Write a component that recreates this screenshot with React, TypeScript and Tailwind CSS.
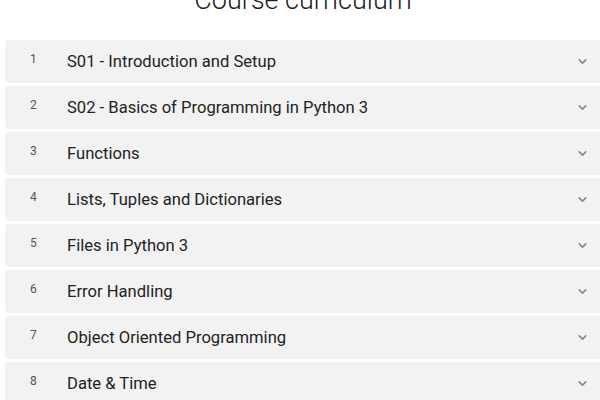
import { ChevronDown } from 'lucide-react'

const SECTIONS = [
  'S01 - Introduction and Setup',
  'S02 - Basics of Programming in Python 3',
  'Functions',
  'Lists, Tuples and Dictionaries',
  'Files in Python 3',
  'Error Handling',
  'Object Oriented Programming',
  'Date & Time',
]

export default function App() {
  return (
    <div className="w-[600px] h-[400px] overflow-hidden bg-white font-['Roboto',sans-serif]">
      <h2 className="-mt-[18px] text-center text-[27px] leading-[36px] font-light text-[#222] pl-[6px]">
        Course curriculum
      </h2>
      <div className="mt-[22px] ml-[5px] w-[610px] flex flex-col gap-[3px]">
        {SECTIONS.map((title, i) => (
          <div key={title} className="h-[43px] rounded-[3px] bg-[#f2f2f2] flex items-center">
            <span className="w-[62px] pl-[25px] -mt-[5px] text-[12px] text-[#555]">{i + 1}</span>
            <span className="flex-1 mt-[2px] text-[16.6px] text-[#222]">{title}</span>
            <ChevronDown className="mr-[26px] w-[13px] h-[13px] text-[#888]" strokeWidth={3} />
          </div>
        ))}
      </div>
    </div>
  )
}
